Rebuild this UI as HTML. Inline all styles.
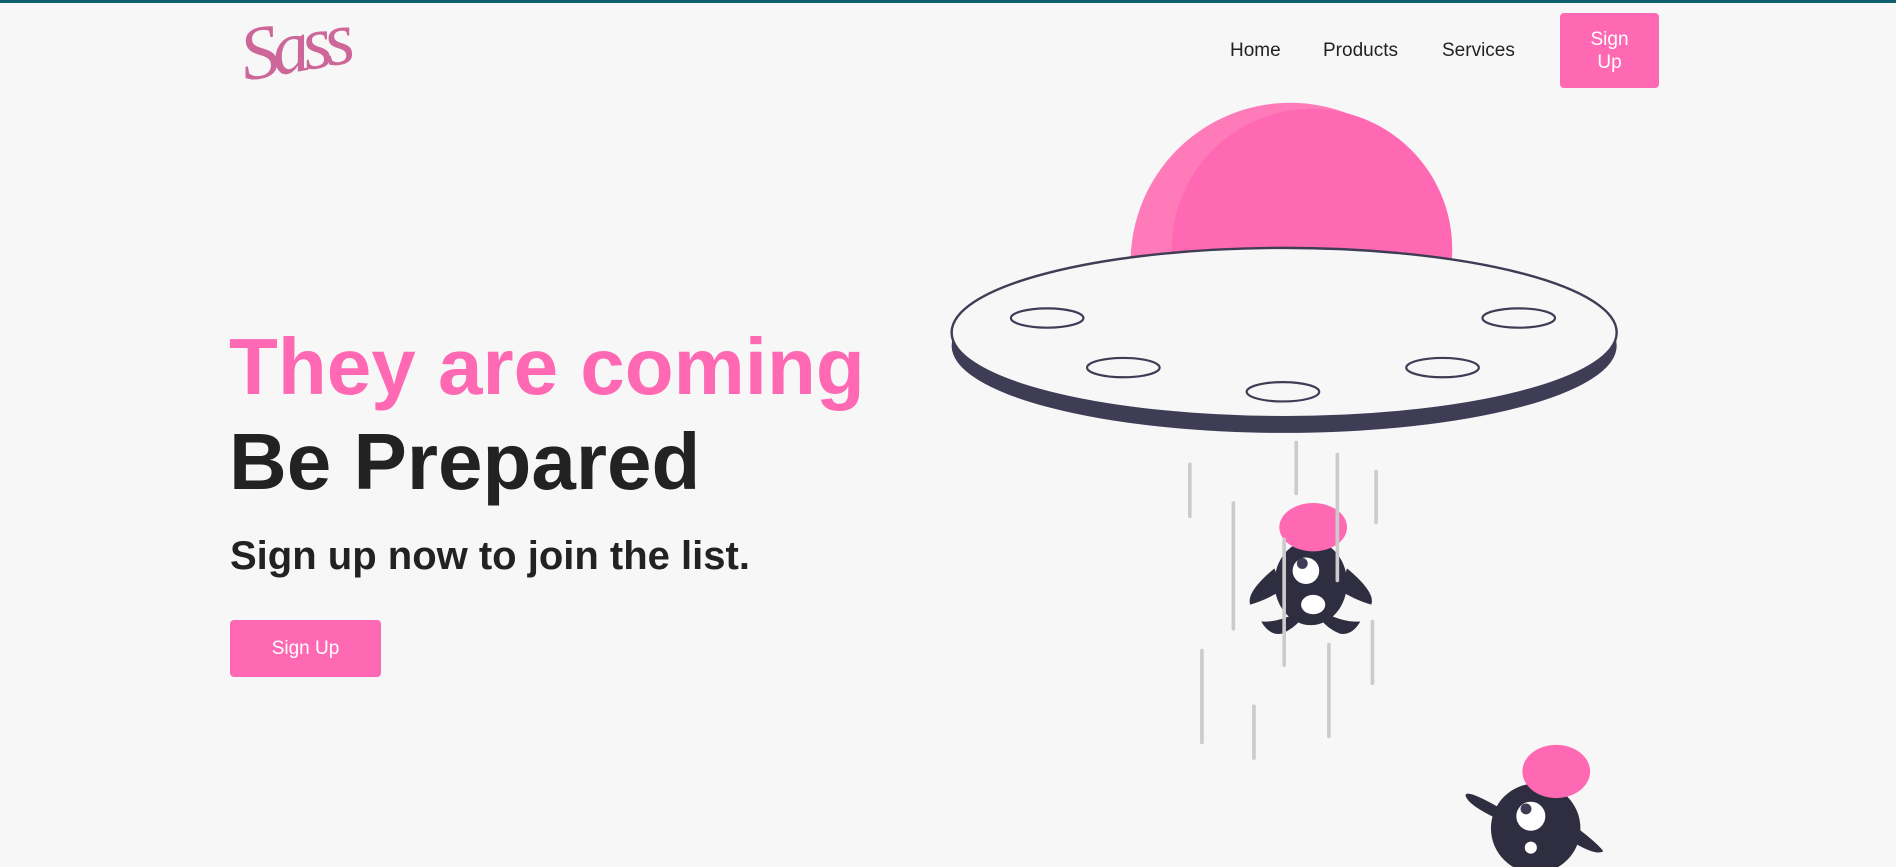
<!DOCTYPE html>
<html><head><meta charset="utf-8"><style>
html,body{margin:0;padding:0;width:1896px;height:867px;overflow:hidden;background:#f7f7f7;font-family:"Liberation Sans",Arial,sans-serif;}
.top{position:absolute;left:0;top:0;width:1896px;height:3px;background:#0f5f6f;}
.nav a{position:absolute;top:40px;font-size:19px;color:#222;text-decoration:none;}
.btn{position:absolute;background:#ff69b4;color:#fff;border-radius:4px;text-align:center;}
h1{position:absolute;margin:0;font-weight:bold;white-space:nowrap;}
</style></head><body>
<div class="top"></div>
<div style="position:absolute;left:240px;top:4px;font-family:'Liberation Serif',serif;font-style:italic;font-size:76px;color:#cd6799;letter-spacing:-7px;transform:rotate(-10deg);">Sass</div>
<div class="nav"><a style="left:1230px">Home</a><a style="left:1323px">Products</a><a style="left:1442px">Services</a></div>
<div class="btn" style="left:1560px;top:13px;width:99px;height:75px;font-size:19px;line-height:23px;padding-top:15px;box-sizing:border-box;">Sign<br>Up</div>
<h1 style="left:229px;top:321px;font-size:80px;color:#ff69b4;">They are coming</h1>
<h1 style="left:229px;top:416px;font-size:80px;color:#222;">Be Prepared</h1>
<h1 style="left:230px;top:534px;font-size:40px;color:#222;">Sign up now to join the list.</h1>
<div class="btn" style="left:230px;top:620px;width:151px;height:57px;line-height:57px;font-size:19px;">Sign Up</div>
<svg style="position:absolute;left:0;top:0" width="1896" height="867" viewBox="0 0 1568 717">
<clipPath id="c"><rect x="900" y="60" width="320" height="155"/></clipPath>
<circle cx="1067" cy="217" r="132" fill="#ff7ab8" clip-path="url(#c)"/>
<circle cx="1085" cy="206" r="116" fill="#ff69b4" clip-path="url(#c)"/>
<ellipse cx="1062" cy="286" rx="275" ry="72" fill="#3f3d56"/>
<ellipse cx="1062" cy="275" rx="275" ry="70" fill="#f7f7f7" stroke="#3f3d56" stroke-width="2"/>
<g fill="none" stroke="#3f3d56" stroke-width="1.8">
<ellipse cx="866" cy="263" rx="30" ry="8"/><ellipse cx="929" cy="304" rx="30" ry="8"/><ellipse cx="1061" cy="324" rx="30" ry="8"/><ellipse cx="1193" cy="304" rx="30" ry="8"/><ellipse cx="1256" cy="263" rx="30" ry="8"/></g>
<g fill="#2f2e41">
<ellipse cx="1084" cy="482" rx="30" ry="35"/>
<path d="M1054 470 Q1030 490 1034 500 Q1048 496 1060 488Z"/><path d="M1114 470 Q1138 490 1134 500 Q1120 496 1108 488Z"/>
<path d="M1070 508 Q1055 515 1043 514 Q1050 526 1060 524 Q1070 520 1076 512Z"/><path d="M1098 508 Q1113 515 1125 514 Q1118 526 1108 524 Q1098 520 1092 512Z"/>
</g>
<ellipse cx="1086" cy="436" rx="28" ry="20" fill="#ff69b4"/>
<circle cx="1080" cy="472" r="11" fill="#fff"/><circle cx="1077" cy="466" r="4.5" fill="#3f3d56"/>
<ellipse cx="1086" cy="500" rx="10" ry="8" fill="#fff"/>
<g stroke="#cbcbcb" stroke-width="3" stroke-linecap="round">
<line x1="984" y1="384" x2="984" y2="427"/><line x1="1020" y1="416" x2="1020" y2="520"/><line x1="1072" y1="366" x2="1072" y2="408"/><line x1="1106" y1="376" x2="1106" y2="480"/><line x1="1138" y1="390" x2="1138" y2="432"/><line x1="1062" y1="446" x2="1062" y2="550"/><line x1="994" y1="538" x2="994" y2="614"/><line x1="1037" y1="584" x2="1037" y2="627"/><line x1="1099" y1="533" x2="1099" y2="609"/><line x1="1135" y1="514" x2="1135" y2="565"/></g>
<g fill="#2f2e41">
<circle cx="1270" cy="685" r="37"/>
<path d="M1240 668 Q1212 652 1212 658 Q1214 666 1240 678Z"/>
<path d="M1298 680 Q1320 696 1326 704 Q1320 708 1300 696Z"/>
</g>
<ellipse cx="1287" cy="638" rx="28" ry="22" fill="#ff69b4"/>
<circle cx="1266" cy="675" r="12" fill="#fff"/><circle cx="1262" cy="669" r="4.5" fill="#3f3d56"/>
<circle cx="1266" cy="701" r="5" fill="#fff"/>
</svg>
</body></html>
